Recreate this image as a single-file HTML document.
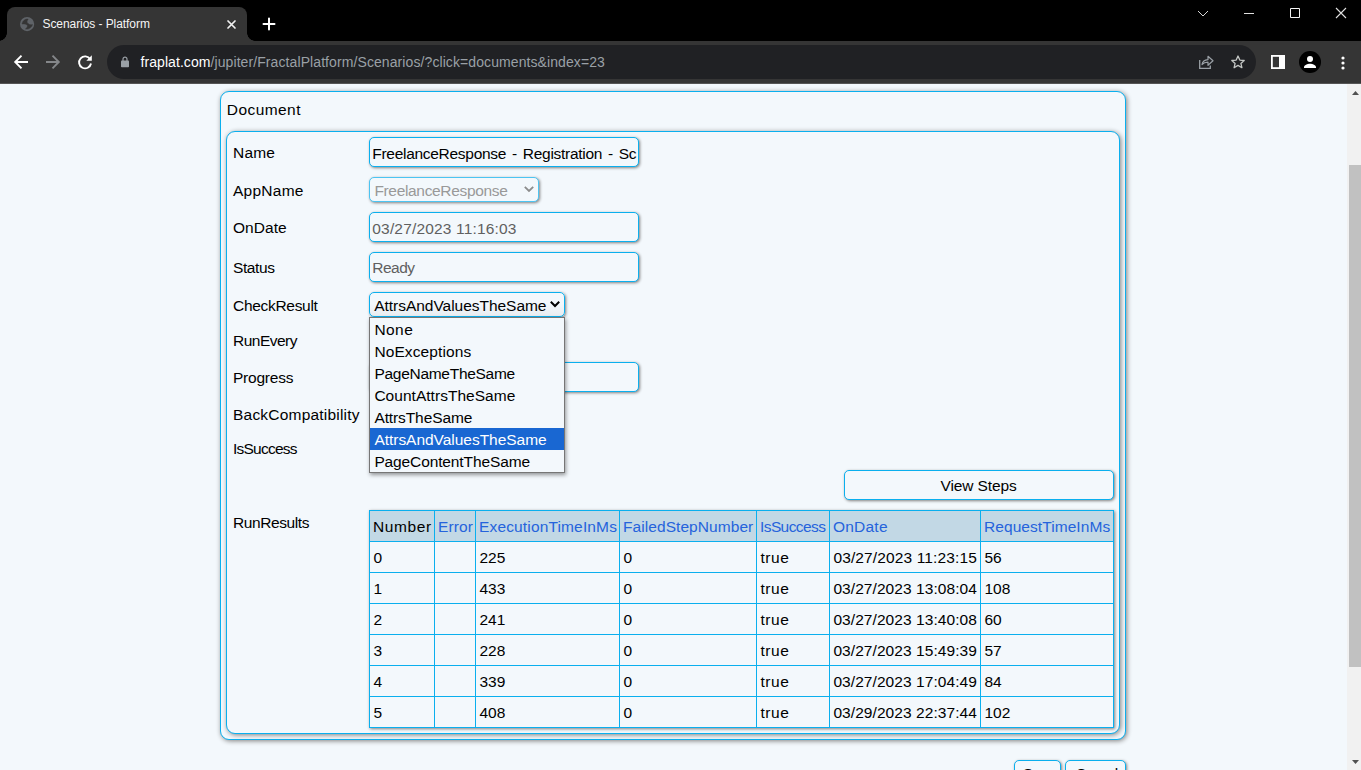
<!DOCTYPE html>
<html lang="en"><head><meta charset="utf-8"><title>Scenarios - Platform</title>
<style>
*{box-sizing:border-box}
html,body{margin:0;padding:0}
body{width:1361px;height:770px;overflow:hidden;position:relative;background:#f3f8fc;font-family:"Liberation Sans", sans-serif;font-size:15.5px;color:#000}
.t{position:absolute;white-space:pre;line-height:20px;display:block}
svg{position:absolute;overflow:visible}
#titlebar{position:absolute;left:0;top:0;width:1361px;height:41px;background:#000}
#tab{position:absolute;left:7px;top:7px;width:240px;height:34px;background:#353535;border-radius:8px 8px 0 0}
#tab:before,#tab:after{content:"";position:absolute;bottom:0;width:8px;height:8px}
#tab:before{left:-8px;background:radial-gradient(circle at 0 0,#000 7.5px,#353535 8px)}
#tab:after{right:-8px;background:radial-gradient(circle at 100% 0,#000 7.5px,#353535 8px)}
#toolbar{position:absolute;left:0;top:41px;width:1361px;height:43px;background:#353535;border-bottom:1px solid #555}
#omni{position:absolute;left:107px;top:4px;width:1149px;height:34px;border-radius:17px;background:#202124}
#page{position:absolute;left:0;top:84px;width:1361px;height:686px;overflow:hidden;background:#f3f8fc}
.box{position:absolute;border:1px solid #0aafee;border-radius:9px;box-shadow:1px 1px 5px gray;background:#f3f8fc}
.inp,.btn{position:absolute;border:1px solid #0aafee;border-radius:5px;box-shadow:1px 1px 3px gray;background:#f3f8fc;overflow:hidden}
.clip{position:absolute;left:0;top:0;height:100%;overflow:hidden}
#dd{position:absolute;left:369px;top:233px;width:196px;height:156px;border:1px solid #767676;background:#f3f8fc;box-shadow:1px 2px 4px rgba(0,0,0,.4)}
#dd .sel{position:absolute;left:0;top:110px;width:194px;height:22px;background:#1967d2}
#rr{position:absolute;left:369px;top:426px;border-collapse:collapse;table-layout:fixed;width:745px;box-shadow:1px 1px 3px gray}
#rr th,#rr td{border:1px solid #0aafee;height:31px;padding:0;position:relative;font-weight:400;text-align:left}
#rr th{background:#c2d8e5;color:#2563dc}
#rr th.k{color:#000}
#sb{position:absolute;left:1347px;top:0;width:14px;height:686px;background:#f1f1f1}
#sb i{position:absolute;left:2px;top:81px;width:12px;height:502px;background:#c1c1c1}
</style></head>
<body>
<div id="titlebar">
<div id="tab">
<svg style="left:12.9px;top:9.9px" width="14.2" height="14.2" viewBox="0 0 14 14"><circle cx="7" cy="7" r="7" fill="#5f6368"/><path d="M8 2.1C5.6 1.7 2.6 3.4 2 6.9C4.2 6.7 6.3 6.8 7.1 8C7.8 9.1 7.2 10.6 5.4 11.8C8.2 12.4 11.6 10.8 12.3 7.5C10.8 8 9.2 7.7 7.9 6.5C6.6 5.3 6.7 3.6 8 2.1z" fill="#353535" stroke="#353535" stroke-width="0.5" stroke-linejoin="round"/></svg>
<span class="t" style="left:35.5px;top:7px;font-size:12px;letter-spacing:-0.07px;color:#f4f4f4;">Scenarios - Platform</span>
<svg style="left:219.500px;top:12.500px" width="9" height="9" viewBox="0 0 9 9"><path d="M1 1l7 7M8 1l-7 7" stroke="#f1f1f1" stroke-width="1.700" stroke-linecap="round" fill="none"/></svg>
</div>
<svg style="left:263px;top:18px" width="12" height="12" viewBox="0 0 12 12"><path d="M6 .5v11M.5 6h11" stroke="#fff" stroke-width="2" stroke-linecap="round" fill="none"/></svg>
<svg style="left:1197px;top:9.500px" width="12" height="8" viewBox="0 0 12 8"><path d="M1 1l5 5 5-5" stroke="#d8d8d8" stroke-width="1" fill="none"/></svg>
<svg style="left:1244px;top:13px" width="10" height="1" viewBox="0 0 10 1"><path d="M0 .5h10" stroke="#e0e0e0" stroke-width="1" fill="none"/></svg>
<svg style="left:1290px;top:8px" width="10" height="10" viewBox="0 0 10 10"><path d="M.5 .5h9v9h-9z" stroke="#f4f4f4" stroke-width="1" fill="none"/></svg>
<svg style="left:1336px;top:8px" width="10" height="10" viewBox="0 0 10 10"><path d="M0 0l10 10M10 0l-10 10" stroke="#e0e0e0" stroke-width="1.100" fill="none"/></svg>
</div>
<div id="toolbar">
<div id="omni"></div>
<svg style="left:14px;top:14px" width="14" height="14" viewBox="0 0 14 14"><path d="M14 7H1.500M7.500 .7L1.200 7l6.300 6.300" stroke="#fff" stroke-width="1.900" fill="none"/></svg>
<svg style="left:46px;top:14px" width="14" height="14" viewBox="0 0 14 14"><path d="M0 7h12.500M6.500 .7L12.800 7l-6.300 6.300" stroke="#85878a" stroke-width="1.900" fill="none"/></svg>
<svg style="left:78px;top:14px" width="14" height="14" viewBox="0 0 14 14"><path d="M12.200 4.200A6 6 0 1 0 13 8.500" stroke="#fff" stroke-width="1.900" fill="none"/><path d="M13.800 .3v5.500H8.300z" fill="#fff"/></svg>
<svg style="left:121px;top:15px" width="8" height="12" viewBox="0 0 8 12"><rect x="0" y="4.500" width="8" height="6.800" rx=".8" fill="#9aa0a6"/><path d="M2 5V3.200a2 2 0 0 1 4 0V5" stroke="#9aa0a6" stroke-width="1.200" fill="none"/></svg>
<span class="t" style="left:140.5px;top:11px;font-size:14px;letter-spacing:0.07px;color:#fff;">fraplat.com</span>
<span class="t" style="left:210.5px;top:11px;font-size:14px;letter-spacing:0.09px;color:#9aa0a6;">/jupiter/FractalPlatform/Scenarios/?click=documents&amp;index=23</span>
<svg style="left:1199px;top:14px" width="15" height="14" viewBox="0 0 15 14"><path d="M.7 5v8.300h10.600V10.500" stroke="#9aa0a6" stroke-width="1.300" fill="none"/><path d="M3 9.500c.5-3 2.500-4.700 6-4.900V1.300l5 4.500-5 4.500V7.200C6.500 7.200 4.500 7.800 3 9.500z" stroke="#9aa0a6" stroke-width="1.200" fill="none" stroke-linejoin="round"/></svg>
<svg style="left:1231px;top:14px" width="14" height="14" viewBox="0 0 14 14"><path d="M7 1l1.800 4.100 4.400.4-3.300 2.900 1 4.300L7 10.400 3.100 12.700l1-4.300L.8 5.500l4.400-.4z" stroke="#c4c7c5" stroke-width="1.300" fill="none" stroke-linejoin="round"/></svg>
<svg style="left:1271px;top:14px" width="14" height="14" viewBox="0 0 14 14"><rect x=".9" y=".9" width="12.200" height="12.200" stroke="#fff" stroke-width="1.800" fill="none"/><rect x="8" y="1" width="5.500" height="12" fill="#fff"/></svg>
<svg style="left:1299px;top:10px" width="22" height="22" viewBox="0 0 22 22"><circle cx="11" cy="11" r="11" fill="#000"/><circle cx="11" cy="8" r="3" fill="#fff"/><path d="M5 16.500c0-2.700 3.500-3.800 6-3.800s6 1.100 6 3.800v.5H5z" fill="#fff"/></svg>
<svg style="left:1340.500px;top:14.500px" width="4" height="14" viewBox="0 0 4 14"><circle cx="2" cy="2" r="1.600" fill="#fff"/><circle cx="2" cy="7" r="1.600" fill="#fff"/><circle cx="2" cy="12" r="1.600" fill="#fff"/></svg>
</div>
<div id="page">
<div class="box" style="left:220px;top:7px;width:906px;height:649px"></div>
<span class="t" style="left:226.8px;top:16px;letter-spacing:0.43px;">Document</span>
<div class="box" style="left:226px;top:47px;width:894px;height:603px"></div>
<label class="t" style="left:233.0px;top:59px;letter-spacing:0.21px;">Name</label>
<label class="t" style="left:233.0px;top:97px;letter-spacing:0.26px;">AppName</label>
<label class="t" style="left:233.0px;top:134px;letter-spacing:0.06px;">OnDate</label>
<label class="t" style="left:233.0px;top:174px;letter-spacing:-0.39px;">Status</label>
<label class="t" style="left:233.0px;top:212px;letter-spacing:-0.3px;">CheckResult</label>
<label class="t" style="left:233.0px;top:247px;letter-spacing:-0.51px;">RunEvery</label>
<label class="t" style="left:233.0px;top:284px;letter-spacing:-0.22px;">Progress</label>
<label class="t" style="left:233.0px;top:321px;letter-spacing:0.21px;">BackCompatibility</label>
<label class="t" style="left:233.0px;top:355px;letter-spacing:-0.77px;">IsSuccess</label>
<label class="t" style="left:233.0px;top:429px;letter-spacing:-0.4px;">RunResults</label>
<div class="inp" style="left:369px;top:53px;width:270px;height:30px;"><div class="clip" style="width:267px"><span class="t" style="left:2.3px;top:6px;word-spacing:1.92px;letter-spacing:-0.29px;">FreelanceResponse - Registration - Sc</span></div></div>
<div class="inp" style="left:369px;top:93px;width:170px;height:25px;border-color:#4cc4f2"><span class="t" style="left:4.4px;top:3px;letter-spacing:-0.33px;color:#999;">FreelanceResponse</span><svg style="left:154px;top:8px" width="10" height="6" viewBox="0 0 10 6"><path d="M.8 .8L5 5l4.200-4.200" stroke="#8c8c8c" stroke-width="1.8" fill="none"/></svg></div>
<div class="inp" style="left:369px;top:128px;width:270px;height:30px;"><span class="t" style="left:2.3px;top:6px;letter-spacing:0.17px;color:#606060;">03/27/2023 11:16:03</span></div>
<div class="inp" style="left:369px;top:168px;width:270px;height:30px;"><span class="t" style="left:2.3px;top:5px;letter-spacing:-0.53px;color:#606060;">Ready</span></div>
<div class="inp" style="left:369px;top:208px;width:196px;height:25px;background:linear-gradient(#f3f8fc 45%,#e9edf1)"><span class="t" style="left:4.2px;top:3px;letter-spacing:-0.03px;">AttrsAndValuesTheSame</span><svg style="left:180px;top:8px" width="10" height="6" viewBox="0 0 10 6"><path d="M.8 .8L5 5l4.200-4.200" stroke="#000" stroke-width="2" fill="none"/></svg></div>
<div class="inp" style="left:369px;top:278px;width:270px;height:30px;"></div>
<div class="btn" style="left:844px;top:386px;width:270px;height:30px;"><span class="t" style="left:95.5px;top:5px;letter-spacing:-0.11px;">View Steps</span></div>
<table id="rr">
<colgroup><col style="width:65px"><col style="width:41px"><col style="width:144px"><col style="width:137px"><col style="width:73px"><col style="width:151px"><col style="width:133px"></colgroup>
<thead><tr><th class="k"><span class="t" style="left:3.0px;top:6px;letter-spacing:0.63px;">Number</span></th><th><span class="t" style="left:3.0px;top:6px;letter-spacing:0.09px;">Error</span></th><th><span class="t" style="left:3.0px;top:6px;letter-spacing:0.15px;">ExecutionTimeInMs</span></th><th><span class="t" style="left:3.0px;top:6px;letter-spacing:0.07px;">FailedStepNumber</span></th><th><span class="t" style="left:3.0px;top:6px;letter-spacing:-0.59px;">IsSuccess</span></th><th><span class="t" style="left:3.0px;top:6px;letter-spacing:0.22px;">OnDate</span></th><th><span class="t" style="left:3.0px;top:6px;letter-spacing:0.07px;">RequestTimeInMs</span></th></tr></thead>
<tbody>
<tr><td><span class="t" style="left:3.4px;top:6px;">0</span></td><td></td><td><span class="t" style="left:3.4px;top:6px;">225</span></td><td><span class="t" style="left:3.4px;top:6px;">0</span></td><td><span class="t" style="left:3.4px;top:6px;letter-spacing:0.56px;">true</span></td><td><span class="t" style="left:3.4px;top:6px;letter-spacing:0.13px;">03/27/2023 11:23:15</span></td><td><span class="t" style="left:3.4px;top:6px;">56</span></td></tr>
<tr><td><span class="t" style="left:3.4px;top:6px;">1</span></td><td></td><td><span class="t" style="left:3.4px;top:6px;">433</span></td><td><span class="t" style="left:3.4px;top:6px;">0</span></td><td><span class="t" style="left:3.4px;top:6px;letter-spacing:0.56px;">true</span></td><td><span class="t" style="left:3.4px;top:6px;letter-spacing:0.07px;">03/27/2023 13:08:04</span></td><td><span class="t" style="left:3.4px;top:6px;">108</span></td></tr>
<tr><td><span class="t" style="left:3.4px;top:6px;">2</span></td><td></td><td><span class="t" style="left:3.4px;top:6px;">241</span></td><td><span class="t" style="left:3.4px;top:6px;">0</span></td><td><span class="t" style="left:3.4px;top:6px;letter-spacing:0.56px;">true</span></td><td><span class="t" style="left:3.4px;top:6px;letter-spacing:0.07px;">03/27/2023 13:40:08</span></td><td><span class="t" style="left:3.4px;top:6px;">60</span></td></tr>
<tr><td><span class="t" style="left:3.4px;top:6px;">3</span></td><td></td><td><span class="t" style="left:3.4px;top:6px;">228</span></td><td><span class="t" style="left:3.4px;top:6px;">0</span></td><td><span class="t" style="left:3.4px;top:6px;letter-spacing:0.56px;">true</span></td><td><span class="t" style="left:3.4px;top:6px;letter-spacing:0.07px;">03/27/2023 15:49:39</span></td><td><span class="t" style="left:3.4px;top:6px;">57</span></td></tr>
<tr><td><span class="t" style="left:3.4px;top:6px;">4</span></td><td></td><td><span class="t" style="left:3.4px;top:6px;">339</span></td><td><span class="t" style="left:3.4px;top:6px;">0</span></td><td><span class="t" style="left:3.4px;top:6px;letter-spacing:0.56px;">true</span></td><td><span class="t" style="left:3.4px;top:6px;letter-spacing:0.07px;">03/27/2023 17:04:49</span></td><td><span class="t" style="left:3.4px;top:6px;">84</span></td></tr>
<tr><td><span class="t" style="left:3.4px;top:6px;">5</span></td><td></td><td><span class="t" style="left:3.4px;top:6px;">408</span></td><td><span class="t" style="left:3.4px;top:6px;">0</span></td><td><span class="t" style="left:3.4px;top:6px;letter-spacing:0.56px;">true</span></td><td><span class="t" style="left:3.4px;top:6px;letter-spacing:0.07px;">03/29/2023 22:37:44</span></td><td><span class="t" style="left:3.4px;top:6px;">102</span></td></tr>
</tbody></table>
<div class="btn" style="left:1014px;top:676px;width:47px;height:30px;"><span class="t" style="left:7.8px;top:3px;letter-spacing:-1.88px;">Save</span></div>
<div class="btn" style="left:1065px;top:676px;width:61px;height:30px;"><span class="t" style="left:9.4px;top:3px;letter-spacing:-1.11px;">Cancel</span></div>
<div id="dd"><div class="sel"></div>
<span class="t" style="left:4.4px;top:2px;letter-spacing:0.45px;">None</span>
<span class="t" style="left:4.4px;top:24px;letter-spacing:0.11px;">NoExceptions</span>
<span class="t" style="left:4.4px;top:46px;letter-spacing:-0.28px;">PageNameTheSame</span>
<span class="t" style="left:4.4px;top:68px;letter-spacing:0.03px;">CountAttrsTheSame</span>
<span class="t" style="left:4.4px;top:90px;letter-spacing:-0.1px;">AttrsTheSame</span>
<span class="t" style="left:4.4px;top:112px;letter-spacing:-0.03px;color:#fff;">AttrsAndValuesTheSame</span>
<span class="t" style="left:4.4px;top:134px;letter-spacing:-0.12px;">PageContentTheSame</span>
</div>
<div id="sb"><i></i><svg style="left:5px;top:7px" width="7" height="4" viewBox="0 0 7 4"><path d="M0 4L3.500 0 7 4z" fill="#505050"/></svg><svg style="left:5px;top:676px" width="7" height="4" viewBox="0 0 7 4"><path d="M0 0L3.500 4 7 0z" fill="#505050"/></svg></div>
</div>
</body></html>
